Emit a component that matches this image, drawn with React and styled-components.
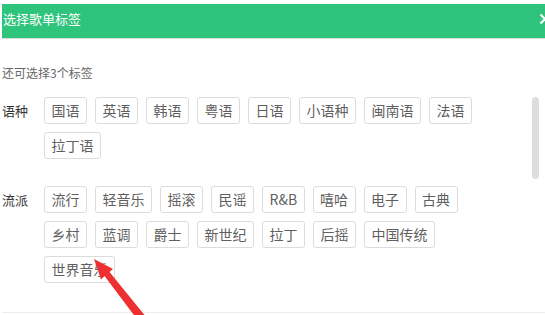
import styled, { createGlobalStyle } from 'styled-components'

const GlobalStyle = createGlobalStyle`
  html, body {
    margin: 0;
    padding: 0;
    background: #fff;
    overflow: hidden;
  }
  body {
    font-family: "Noto Sans CJK SC", "Noto Sans", sans-serif;
  }
`

const Page = styled.div`
  position: relative;
  width: 545px;
  height: 315px;
  overflow: hidden;
  padding: 4px 0 0 2px;
  box-sizing: border-box;
`

const Dialog = styled.div`
  position: relative;
  width: 556px;
`

const Header = styled.div`
  height: 35px;
  box-sizing: border-box;
  padding: 0 7px 4px 1px;
  display: flex;
  align-items: center;
  justify-content: space-between;
  background: #2ec47c;
  border-bottom: 1px solid #d6dcd8;
`

const Title = styled.h3`
  margin: 0;
  font-size: 13px;
  font-weight: 400;
  line-height: 18px;
  color: #fff;
`

const Close = styled.button`
  padding: 0;
  border: 0;
  background: none;
  display: flex;
  cursor: pointer;
`

const Body = styled.div`
  position: relative;
  padding: 25px 0 29px;
  border-bottom: 1px solid #eeeeee;
`

const Hint = styled.p`
  margin: 0 0 15px;
  font-size: 12px;
  line-height: 18px;
  color: #666;
`

const Section = styled.div`
  display: flex;
  align-items: flex-start;
  & + & {
    margin-top: 27px;
  }
`

const Label = styled.div`
  width: 42px;
  flex-shrink: 0;
  font-size: 13px;
  line-height: 27px;
  color: #333;
`

const TagList = styled.ul`
  margin: 0;
  padding: 0;
  list-style: none;
  width: 450px;
  display: flex;
  flex-wrap: wrap;
  gap: 8px;
`

const Tag = styled.li`
  height: 27px;
  box-sizing: border-box;
  padding: 0 6.5px;
  border: 1px solid #dcdcdc;
  border-radius: 3px;
  font-size: 14px;
  line-height: 25px;
  color: #5f5f5f;
  white-space: nowrap;
  cursor: pointer;
`

const ScrollThumb = styled.div`
  position: absolute;
  left: 530px;
  top: 58px;
  width: 7px;
  height: 82px;
  border-radius: 4px;
  background: #dddddd;
`

const Arrow = styled.svg`
  position: absolute;
  left: 0;
  top: 0;
  pointer-events: none;
`

const groups = [
  {
    name: '语种',
    tags: ['国语', '英语', '韩语', '粤语', '日语', '小语种', '闽南语', '法语', '拉丁语'],
  },
  {
    name: '流派',
    tags: [
      '流行', '轻音乐', '摇滚', '民谣', 'R&B', '嘻哈', '电子', '古典',
      '乡村', '蓝调', '爵士', '新世纪', '拉丁', '后摇', '中国传统', '世界音乐',
    ],
  },
]

export default function App() {
  return (
    <>
      <GlobalStyle />
      <Page>
        <Dialog>
          <Header>
            <Title>选择歌单标签</Title>
            <Close aria-label="关闭">
              <svg width="12" height="12" viewBox="0 0 12 12">
                <path d="M1.5 1.5L10.5 10.5M10.5 1.5L1.5 10.5" stroke="#fff" strokeWidth="2.2" />
              </svg>
            </Close>
          </Header>
          <Body>
            <Hint>还可选择3个标签</Hint>
            {groups.map((g) => (
              <Section key={g.name}>
                <Label>{g.name}</Label>
                <TagList>
                  {g.tags.map((t) => (
                    <Tag key={t}>{t}</Tag>
                  ))}
                </TagList>
              </Section>
            ))}
            <ScrollThumb />
          </Body>
        </Dialog>
        <Arrow width="545" height="315" viewBox="0 0 545 315">
          <polygon
            points="94,259 113,269 109.5,272 144.5,315 138,320.5 104.5,276 101,279.5"
            fill="#ee3030"
          />
        </Arrow>
      </Page>
    </>
  )
}
